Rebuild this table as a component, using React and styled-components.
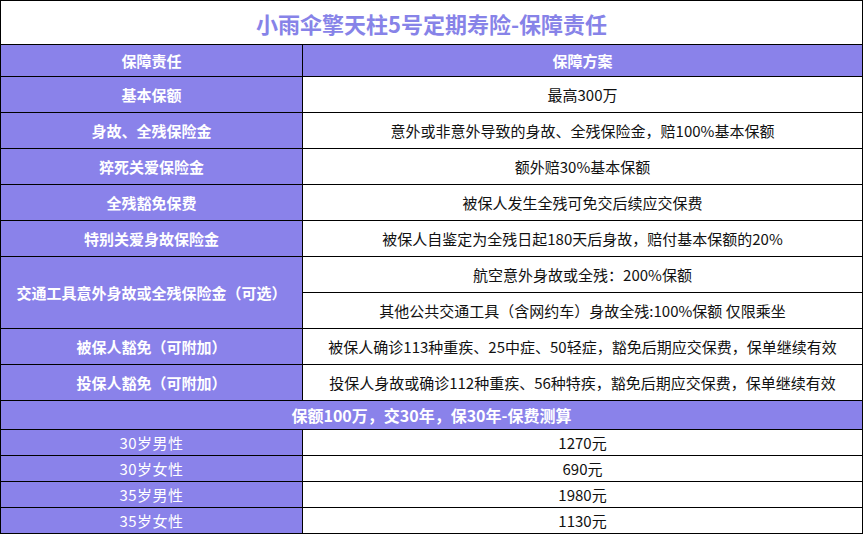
import React from "react";
import styled, { createGlobalStyle } from "styled-components";

const Global = createGlobalStyle`
  html, body { margin: 0; padding: 0; background: #fff; }
  body { font-family: "Noto Sans CJK SC", "Noto Sans", sans-serif; }
`;

const PURPLE = "#8a82ea";

const Table = styled.table`
  width: 863px;
  border-collapse: collapse;
  table-layout: fixed;
  border: 1px solid #000;
`;

const Row = styled.tr`
  height: ${(p) => p.$h}px;
`;

const TitleCell = styled.td`
  border: 1px solid #000;
  text-align: center;
  vertical-align: middle;
  color: #8783e8;
  font-size: 22px;
  font-weight: 700;
  padding: 0;
  background: #fff;
`;

const HeadCell = styled.td`
  border: 1px solid #000;
  background: ${PURPLE};
  color: #fff;
  text-align: center;
  vertical-align: middle;
  font-size: ${(p) => p.$size || 15}px;
  font-weight: ${(p) => (p.$light ? 400 : 700)};
  letter-spacing: ${(p) => (p.$light ? "0.5px" : "0")};
  padding: 0 4px;
  white-space: nowrap;
`;

const ValueCell = styled.td`
  border: 1px solid #000;
  background: #fff;
  color: #111;
  text-align: center;
  vertical-align: middle;
  font-size: 15px;
  padding: 0 4px;
  white-space: nowrap;
`;

const rows = [
  ["基本保额", "最高300万"],
  ["身故、全残保险金", "意外或非意外导致的身故、全残保险金，赔100%基本保额"],
  ["猝死关爱保险金", "额外赔30%基本保额"],
  ["全残豁免保费", "被保人发生全残可免交后续应交保费"],
  ["特别关爱身故保险金", "被保人自鉴定为全残日起180天后身故，赔付基本保额的20%"],
];

const rows2 = [
  ["被保人豁免（可附加）", "被保人确诊113种重疾、25中症、50轻症，豁免后期应交保费，保单继续有效"],
  ["投保人豁免（可附加）", "投保人身故或确诊112种重疾、56种特疾，豁免后期应交保费，保单继续有效"],
];

const prices = [
  ["30岁男性", "1270元"],
  ["30岁女性", "690元"],
  ["35岁男性", "1980元"],
  ["35岁女性", "1130元"],
];

export default function App() {
  return (
    <>
      <Global />
      <Table>
        <colgroup>
          <col style={{ width: 302 }} />
          <col />
        </colgroup>
        <tbody>
          <Row $h={44}>
            <TitleCell colSpan={2}>小雨伞擎天柱5号定期寿险-保障责任</TitleCell>
          </Row>
          <Row $h={32}>
            <HeadCell>保障责任</HeadCell>
            <HeadCell>保障方案</HeadCell>
          </Row>
          {rows.map(([k, v]) => (
            <Row $h={36} key={k}>
              <HeadCell>{k}</HeadCell>
              <ValueCell>{v}</ValueCell>
            </Row>
          ))}
          <Row $h={36}>
            <HeadCell rowSpan={2}>交通工具意外身故或全残保险金（可选）</HeadCell>
            <ValueCell>航空意外身故或全残：200%保额</ValueCell>
          </Row>
          <Row $h={36}>
            <ValueCell>其他公共交通工具（含网约车）身故全残:100%保额 仅限乘坐</ValueCell>
          </Row>
          {rows2.map(([k, v]) => (
            <Row $h={36} key={k}>
              <HeadCell>{k}</HeadCell>
              <ValueCell>{v}</ValueCell>
            </Row>
          ))}
          <Row $h={29}>
            <HeadCell colSpan={2} $size={16}>保额100万，交30年，保30年-保费测算</HeadCell>
          </Row>
          {prices.map(([k, v]) => (
            <Row $h={26} key={k}>
              <HeadCell $light>{k}</HeadCell>
              <ValueCell>{v}</ValueCell>
            </Row>
          ))}
        </tbody>
      </Table>
    </>
  );
}
